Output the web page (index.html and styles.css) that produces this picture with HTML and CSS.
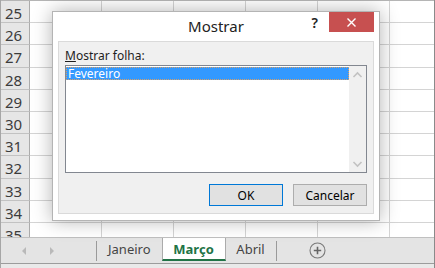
FILE: index.html
```html
<!DOCTYPE html>
<html lang="pt">

<head>
    <meta charset="UTF-8">
    <title>Mostrar folha</title>
    <link rel="stylesheet" href="styles.css">
</head>

<body>
    <div class="window">
        <!-- grid of cells, rows 25..35 -->
        <div class="sheet">
            <div class="row"><div class="rh">25</div><div class="cell"></div><div class="cell"></div><div class="cell"></div><div class="cell"></div><div class="cell"></div><div class="cell"></div></div>
            <div class="row"><div class="rh">26</div><div class="cell"></div><div class="cell"></div><div class="cell"></div><div class="cell"></div><div class="cell"></div><div class="cell"></div></div>
            <div class="row"><div class="rh">27</div><div class="cell"></div><div class="cell"></div><div class="cell"></div><div class="cell"></div><div class="cell"></div><div class="cell"></div></div>
            <div class="row"><div class="rh">28</div><div class="cell"></div><div class="cell"></div><div class="cell"></div><div class="cell"></div><div class="cell"></div><div class="cell"></div></div>
            <div class="row"><div class="rh">29</div><div class="cell"></div><div class="cell"></div><div class="cell"></div><div class="cell"></div><div class="cell"></div><div class="cell"></div></div>
            <div class="row"><div class="rh">30</div><div class="cell"></div><div class="cell"></div><div class="cell"></div><div class="cell"></div><div class="cell"></div><div class="cell"></div></div>
            <div class="row"><div class="rh">31</div><div class="cell"></div><div class="cell"></div><div class="cell"></div><div class="cell"></div><div class="cell"></div><div class="cell"></div></div>
            <div class="row"><div class="rh">32</div><div class="cell"></div><div class="cell"></div><div class="cell"></div><div class="cell"></div><div class="cell"></div><div class="cell"></div></div>
            <div class="row"><div class="rh">33</div><div class="cell"></div><div class="cell"></div><div class="cell"></div><div class="cell"></div><div class="cell"></div><div class="cell"></div></div>
            <div class="row"><div class="rh">34</div><div class="cell"></div><div class="cell"></div><div class="cell"></div><div class="cell"></div><div class="cell"></div><div class="cell"></div></div>
            <div class="row"><div class="rh">35</div><div class="cell"></div><div class="cell"></div><div class="cell"></div><div class="cell"></div><div class="cell"></div><div class="cell"></div></div>
        </div>

        <!-- sheet tabs -->
        <div class="tabbar">
            <div class="nav">
                <span class="arrow arrow-left"></span>
                <span class="arrow arrow-right"></span>
            </div>
            <span class="tab-sep"></span>
            <div class="tab">Janeiro</div>
            <div class="tab active">Março</div>
            <div class="tab">Abril</div>
            <span class="tab-sep"></span>
            <div class="add-sheet">
                <svg width="17" height="17" viewBox="0 0 17 17">
                    <circle cx="8.5" cy="8.5" r="7.5" fill="none" stroke="#7a7a7a" stroke-width="1.1" />
                    <path d="M8.5 4.8v7.4M4.8 8.5h7.4" stroke="#666" stroke-width="1.6" />
                </svg>
            </div>
        </div>
        <div class="status"></div>

        <!-- Mostrar dialog -->
        <div class="dialog">
            <div class="title-bar">
                <span></span>
                <span class="title">Mostrar</span>
                <div class="title-controls">
                    <span class="help">?</span>
                    <div class="close">
                        <svg width="9" height="9" viewBox="0 0 9 9">
                            <path d="M0.5 0.5l8 8M8.5 0.5l-8 8" stroke="#fff" stroke-width="1.4" />
                        </svg>
                    </div>
                </div>
            </div>
            <div class="panel">
                <div class="label"><u>M</u>ostrar folha:</div>
                <div class="listbox">
                    <div class="list-items">
                        <div class="item selected">Fevereiro</div>
                    </div>
                    <div class="scrollbar">
                        <svg width="17" height="10" viewBox="0 0 17 10">
                            <path d="M4.5 7l4-4 4 4" fill="none" stroke="#c2c2c2" stroke-width="1.6" />
                        </svg>
                        <svg width="17" height="10" viewBox="0 0 17 10">
                            <path d="M4.5 3l4 4 4-4" fill="none" stroke="#c2c2c2" stroke-width="1.6" />
                        </svg>
                    </div>
                </div>
                <div class="buttons">
                    <button class="btn default">OK</button>
                    <button class="btn">Cancelar</button>
                </div>
            </div>
        </div>
    </div>
</body>

</html>
```

FILE: styles.css
```css
:root {
    --ui-font: "Segoe UI", "Noto Sans", "Open Sans", sans-serif;
    --grid-line: #d4d4d4;
    --header-bg: #e6e6e6;
    --excel-green: #217346;
}

body {
    margin: 0;
    font-family: var(--ui-font);
    background-color: #ffffff;
}

.window {
    position: relative;
    width: 435px;
    height: 268px;
    box-sizing: border-box;
    border-left: 1px solid #a6a6a6;
    border-right: 1px solid #8a8a8a;
    overflow: hidden;
    background-color: #ffffff;
}

/* sheet grid */
.sheet {
    height: 237px;
    box-sizing: border-box;
    border-top: 1px solid #b5b5b5;
    overflow: hidden;
}

.row {
    display: flex;
    height: 22.2px;
}

.rh {
    flex: none;
    width: 29px;
    box-sizing: border-box;
    padding: 1px 0 0 4px;
    background-color: var(--header-bg);
    border-right: 1px solid #ababab;
    border-bottom: 1px solid #c2c2c2;
    font-size: 15px;
    line-height: 22px;
    color: #3c3c3c;
}

.cell {
    flex: none;
    width: 72px;
    box-sizing: border-box;
    border-right: 1px solid var(--grid-line);
    border-bottom: 1px solid var(--grid-line);
}

/* sheet tabs */
.tabbar {
    display: flex;
    align-items: flex-start;
    height: 27px;
    box-sizing: border-box;
    background-color: #e4e4e4;
    border-top: 1px solid #c0c0c0;
    border-bottom: 1px solid #9c9c9c;
}

.status {
    height: 4px;
    background-color: #e9e9e9;
}

.nav {
    display: flex;
    align-items: center;
    width: 95px;
    height: 25px;
    padding-left: 21px;
    box-sizing: border-box;
    gap: 24px;
}

.arrow {
    width: 0;
    height: 0;
    border-top: 4px solid transparent;
    border-bottom: 4px solid transparent;
}

.arrow-left {
    border-right: 4px solid #b9b9b9;
}

.arrow-right {
    border-left: 4px solid #b9b9b9;
}

.tab-sep {
    width: 1px;
    height: 20px;
    margin-top: 3px;
    background-color: #9a9a9a;
}

.tab {
    height: 23px;
    box-sizing: border-box;
    padding: 0 11px;
    font-size: 13px;
    line-height: 23px;
    color: #444444;
}

.tab:first-of-type {
    width: 65px;
}

.tab.active {
    width: 64px;
    padding: 0;
    text-align: center;
    background-color: #ffffff;
    border-left: 1px solid #ababab;
    border-right: 1px solid #ababab;
    border-bottom: 2px solid var(--excel-green);
    color: var(--excel-green);
    font-weight: bold;
    line-height: 22px;
}

.tab + .tab + .tab {
    width: 50px;
    padding: 0;
    text-align: center;
}

.add-sheet {
    display: flex;
    align-items: center;
    height: 25px;
    margin-left: 32px;
}

/* dialog */
.dialog {
    position: absolute;
    left: 51px;
    top: 11px;
    width: 328px;
    height: 210px;
    box-sizing: border-box;
    padding: 0 5px 6px;
    background-color: #ffffff;
    border: 1px solid #b4b4b4;
    box-shadow: 0 0 18px rgba(0, 0, 0, 0.3);
}

.title-bar {
    display: grid;
    grid-template-columns: 1fr auto 1fr;
    height: 29px;
}

.title {
    font-size: 15px;
    line-height: 29px;
    color: #222222;
}

.title-controls {
    display: flex;
    justify-content: flex-end;
    align-items: flex-start;
    gap: 11px;
}

.help {
    font-size: 14px;
    font-weight: 600;
    line-height: 21px;
    color: #222222;
}

.close {
    display: flex;
    align-items: center;
    justify-content: center;
    width: 45px;
    height: 20px;
    background-color: #c75050;
}

.panel {
    height: 173px;
    box-sizing: border-box;
    padding: 0 6px 7px;
    background-color: #f0f0f0;
    border: 1px solid #dadada;
}

.label {
    padding-top: 6px;
    margin-bottom: 2px;
    font-size: 12px;
    line-height: 15px;
    color: #1e1e1e;
}

.listbox {
    display: flex;
    height: 108px;
    box-sizing: border-box;
    background-color: #ffffff;
    border: 1px solid #828790;
}

.list-items {
    flex: 1;
    padding-top: 1px;
}

.item {
    height: 13px;
    padding-left: 2px;
    font-size: 12px;
    line-height: 13px;
    color: #000000;
}

.item.selected {
    background-color: #3399ff;
    color: #ffffff;
    outline: 1px dotted #d9a066;
    outline-offset: -1px;
}

.scrollbar {
    display: flex;
    flex-direction: column;
    justify-content: space-between;
    width: 17px;
    padding: 4px 0 3px;
    box-sizing: border-box;
    background-color: #f0f0f0;
}

.buttons {
    display: flex;
    justify-content: flex-end;
    gap: 10px;
    margin-top: 11px;
}

.btn {
    width: 74px;
    height: 22px;
    padding: 0;
    box-sizing: border-box;
    background-color: #e1e1e1;
    border: 1px solid #adadad;
    font-family: var(--ui-font);
    font-size: 12px;
    color: #000000;
}

.btn.default {
    border-color: #0078d7;
}
```
